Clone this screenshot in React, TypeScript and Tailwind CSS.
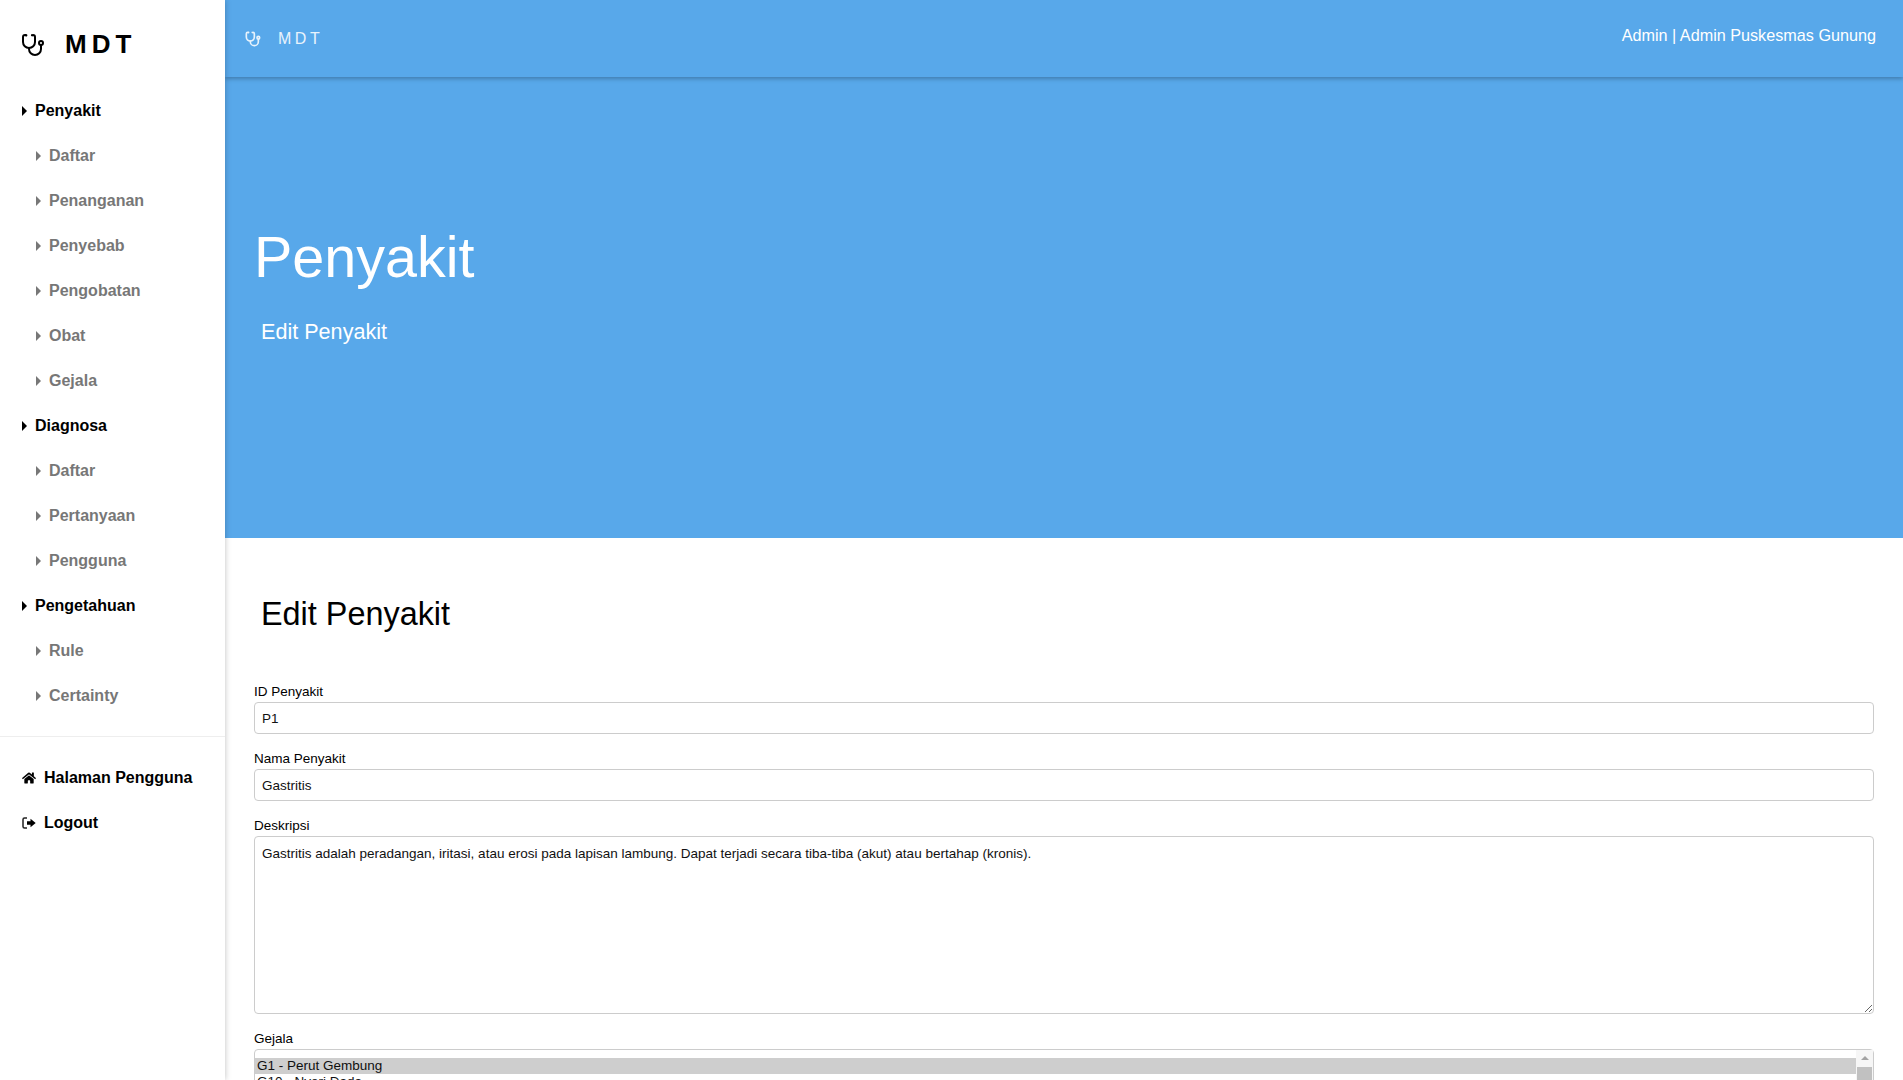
import { FaHome } from "react-icons/fa";

const menu = [
  { title: "Penyakit", items: ["Daftar", "Penanganan", "Penyebab", "Pengobatan", "Obat", "Gejala"] },
  { title: "Diagnosa", items: ["Daftar", "Pertanyaan", "Pengguna"] },
  { title: "Pengetahuan", items: ["Rule", "Certainty"] },
];

const gejala = [
  "G1 - Perut Gembung",
  "G10 - Nyeri Dada",
  "G11 - Mual",
  "G12 - Muntah",
  "G13 - Demam",
  "G14 - Pusing",
  "G15 - Lemas",
  "G16 - Sesak Napas",
  "G17 - Batuk",
  "G18 - Diare",
];

const Caret = ({ className }: { className: string }) => (
  <span className={`inline-block w-0 h-0 border-y-[5px] border-y-transparent border-l-[5px] ${className}`} />
);

const Steth = ({ size, width = 2, className }: { size: number; width?: number; className: string }) => (
  <svg width={size} height={size} viewBox="0 0 24 24" fill="none" stroke="currentColor" strokeWidth={width} strokeLinecap="round" strokeLinejoin="round" className={className}>
    <path d="M4.8 2.3A.3.3 0 1 0 5 2H4a2 2 0 0 0-2 2v5a6 6 0 0 0 6 6a6 6 0 0 0 6-6V4a2 2 0 0 0-2-2h-1a.2.2 0 1 0 .3.3" />
    <path d="M8 15v1a6 6 0 0 0 6 6a6 6 0 0 0 6-6v-4" />
    <circle cx="20" cy="10" r="2" />
  </svg>
);

const LogoutIcon = () => (
  <svg width="14" height="14" viewBox="0 0 14 14" className="shrink-0">
    <path d="M5 2H2.5A1.5 1.5 0 0 0 1 3.5v7A1.5 1.5 0 0 0 2.5 12H5" fill="none" stroke="#222222" strokeWidth="1.5" />
    <path d="M5 5.3h3.5V2.8L13.7 7 8.5 11.2V8.7H5z" fill="#000000" />
  </svg>
);

const Sidebar = () => {
  return (
    <aside className="w-[225px] shrink-0 h-full bg-white shadow-[0_0_6px_rgba(0,0,0,0.25)] z-20 relative">
      <div className="h-[77px] pl-[21px] flex items-center gap-[20px] pt-[12px]">
        <Steth size={24} className="text-black" />
        <span className="text-[26px] font-bold tracking-[5px] text-black">MDT</span>
      </div>
      <nav className="pt-[11px] text-[16px] font-bold">
        {menu.map((group) => (
          <div key={group.title}>
            <a className="h-[45px] pl-[22px] flex items-center gap-[8px] text-black">
              <Caret className="border-l-black" />
              {group.title}
            </a>
            {group.items.map((item) => (
              <a key={group.title + item} className="h-[45px] pl-[36px] flex items-center gap-[8px] text-[#777777]">
                <Caret className="border-l-[#777777]" />
                {item}
              </a>
            ))}
          </div>
        ))}
      </nav>
      <div className="mt-[18px] border-t border-[#eeeeee] pt-[18px] text-[16px] font-bold text-black">
        <a className="h-[45px] pl-[22px] flex items-center gap-[8px]">
          <FaHome size={14} />
          Halaman Pengguna
        </a>
        <a className="h-[45px] pl-[22px] flex items-center gap-[8px]">
          <LogoutIcon />
          Logout
        </a>
      </div>
    </aside>
  );
};

const Field = ({ label, children }: { label: string; children: React.ReactNode }) => (
  <div className="mb-[14px]">
    <label className="block text-[13.5px] leading-[20px] pt-[1px] text-black">{label}</label>
    {children}
  </div>
);

const inputCls = "block w-full h-[32px] px-[7px] border border-[#cccccc] rounded-[4px] bg-white text-[13.5px] text-[#111111] outline-none";

export default function App() {
  return (
    <div className="flex h-screen overflow-hidden bg-white font-['Liberation_Sans',Arial,sans-serif]">
      <Sidebar />
      <div className="flex-1 min-w-0 h-full overflow-hidden">
        <header className="h-[77px] bg-[#58a8ea] shadow-[0_2px_4px_rgba(0,0,0,0.25)] relative z-10 flex justify-between items-start pl-[20px] pr-[27px] text-white">
          <div className="flex items-center gap-[17px] h-[77px]">
            <Steth size={16} width={2.5} className="text-[#e8f3fc]" />
            <span className="text-[16px] tracking-[3.5px] text-[#e8f3fc]">MDT</span>
          </div>
          <div className="pt-[25px] text-[16.2px] leading-[20px]">Admin | Admin Puskesmas Gunung</div>
        </header>
        <section className="h-[461px] bg-[#58a8ea] text-white pl-[29px] pt-[147px]">
          <h1 className="text-[57.5px] leading-[66px]">Penyakit</h1>
          <p className="ml-[7px] mt-[27px] text-[21.6px] leading-[30px]">Edit Penyakit</p>
        </section>
        <main className="px-[29px] pt-[54px]">
          <h2 className="ml-[7px] text-[32.4px] leading-[44px] text-black mb-[45px]">Edit Penyakit</h2>
          <form>
            <Field label="ID Penyakit">
              <input className={inputCls} defaultValue="P1" />
            </Field>
            <Field label="Nama Penyakit">
              <input className={inputCls} defaultValue="Gastritis" />
            </Field>
            <Field label="Deskripsi">
              <textarea
                className="block w-full h-[178px] px-[7px] py-[7px] border border-[#cccccc] rounded-[4px] text-[13.5px] text-[#111111] outline-none"
                defaultValue="Gastritis adalah peradangan, iritasi, atau erosi pada lapisan lambung. Dapat terjadi secara tiba-tiba (akut) atau bertahap (kronis)."
              />
            </Field>
            <Field label="Gejala">
              <div className="relative">
                <select
                  multiple
                  defaultValue={["G1 - Perut Gembung"]}
                  className="block w-full h-[180px] pt-[8px] border border-[#cccccc] rounded-[4px] text-[13.5px] text-[#111111] bg-white outline-none"
                >
                  {gejala.map((g) => (
                    <option key={g} value={g} className="px-[2px]">
                      {g}
                    </option>
                  ))}
                </select>
                {/* scrollbar does not show in the headless browser */}
                <div className="absolute top-[1px] right-[1px] bottom-[1px] w-[17px] bg-[#f6f6f6] flex flex-col items-center">
                  <span className="mt-[6px] w-0 h-0 border-x-[4px] border-x-transparent border-b-[4px] border-b-[#a3a3a3]" />
                  <span className="mt-[7px] w-[15px] h-[60px] bg-[#c1c1c1]" />
                </div>
              </div>
            </Field>
          </form>
        </main>
      </div>
    </div>
  );
}
